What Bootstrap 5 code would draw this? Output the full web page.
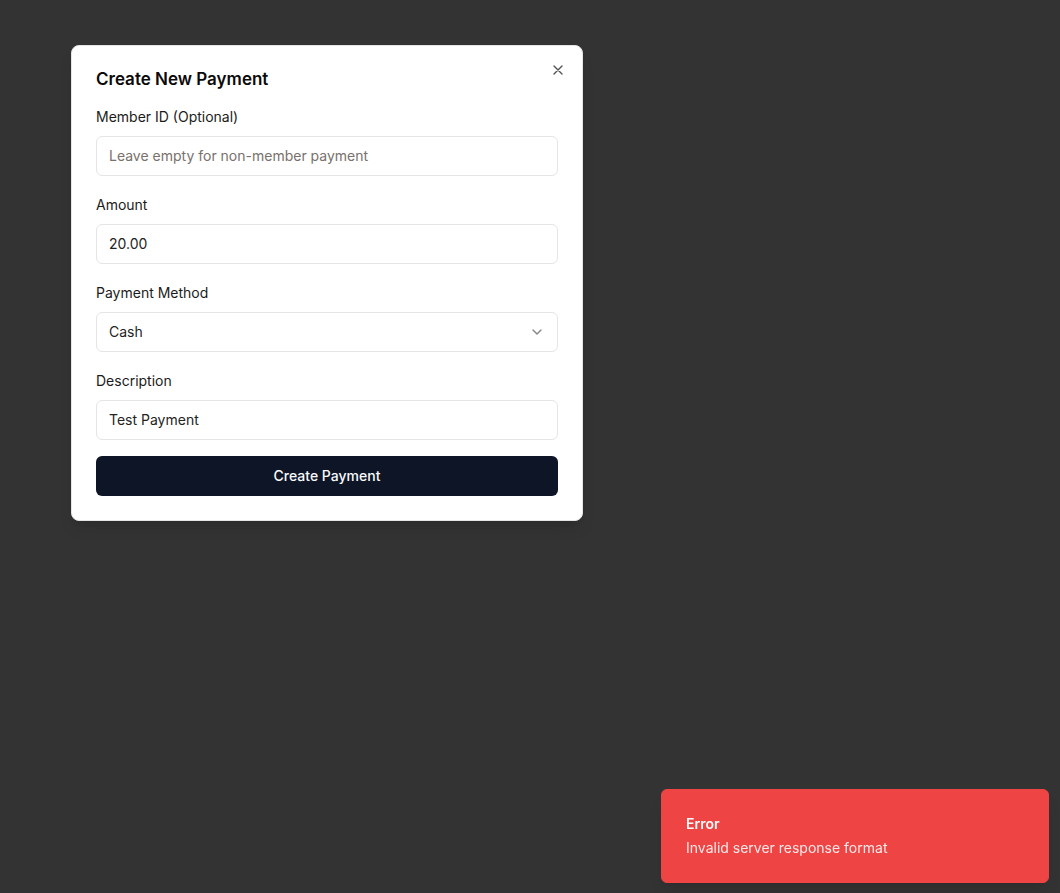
<!DOCTYPE html>
<html lang="en">
<head>
<meta charset="utf-8">
<meta name="viewport" content="width=device-width, initial-scale=1">
<title>Create New Payment</title>
<link href="https://cdn.jsdelivr.net/npm/bootstrap@5.3.0/dist/css/bootstrap.min.css" rel="stylesheet">
<style>
  body { background: #333; color: #0c0a09; font-family: Inter, "Liberation Sans", sans-serif; font-size: 14px; line-height: 20px; }
  .page { padding: 45px 71px; }
  .payment-dialog { max-width: 512px; border: 1px solid #e5e5e5; border-radius: 8px; box-shadow: 0 10px 15px -3px rgba(0,0,0,.1), 0 4px 6px -4px rgba(0,0,0,.1); }
  .dialog-title { font-size: 17px; line-height: 18px; font-weight: 600; }
  .close-btn { top: 16px; right: 16px; width: 16px; height: 16px; opacity: .7; color: #0c0a09; }
  .field-label { display: block; line-height: 26px; margin-bottom: 6px; color: #1c1b1a; }
  .payment-dialog .form-control, .payment-dialog .form-select { height: 40px; padding: 8px 12px; font-size: 14px; line-height: 20px; border-color: #e5e5e5; border-radius: 6px; color: #242322; }
  .payment-dialog .form-control { padding: 7px 12px 9px; }
  .payment-dialog .form-control::placeholder { color: #78716c; }
  .payment-dialog .form-select { background-image: none; }
  .chevron { right: 13px; top: 12px; opacity: .5; }
  .submit-btn, .submit-btn:hover { height: 40px; background: #0d1526; color: #f8fafc; font-size: 14px; line-height: 20px; font-weight: 500; border: 0; border-radius: 6px; }
  .error-toast { width: 388px; max-width: 100%; padding: 24px; background: #ef4444; color: #fafafa; border: 1px solid #ef4444; border-radius: 6px; box-shadow: 0 10px 15px -3px rgba(0,0,0,.1), 0 4px 6px -4px rgba(0,0,0,.1); }
  .toast-message { opacity: .9; }
  .toast-area { padding: 10px 11px; }
</style>
</head>
<body>
<main class="page">
  <section class="payment-dialog bg-white p-4 position-relative" role="dialog" aria-labelledby="title">
    <h1 class="dialog-title mb-3" id="title">Create New Payment</h1>
    <button type="button" class="close-btn btn p-0 border-0 d-flex position-absolute" aria-label="Close">
      <svg width="16" height="16" viewBox="0 0 24 24" fill="none" stroke="currentColor" stroke-width="2" stroke-linecap="round" stroke-linejoin="round"><path d="M18 6 6 18M6 6l12 12"/></svg>
    </button>
    <form class="d-flex flex-column gap-3">
      <div>
        <label class="field-label" for="member">Member ID (Optional)</label>
        <input class="form-control" id="member" type="text" placeholder="Leave empty for non-member payment">
      </div>
      <div>
        <label class="field-label" for="amount">Amount</label>
        <input class="form-control" id="amount" type="text" inputmode="decimal" value="20.00">
      </div>
      <div>
        <label class="field-label" for="method">Payment Method</label>
        <div class="position-relative">
          <select class="form-select" id="method"><option>Cash</option></select>
          <svg class="chevron position-absolute pe-none" width="16" height="16" viewBox="0 0 24 24" fill="none" stroke="currentColor" stroke-width="2" stroke-linecap="round" stroke-linejoin="round" aria-hidden="true"><path d="m6 9 6 6 6-6"/></svg>
        </div>
      </div>
      <div>
        <label class="field-label" for="description">Description</label>
        <input class="form-control" id="description" type="text" value="Test Payment">
      </div>
      <button type="button" class="submit-btn btn w-100">Create Payment</button>
    </form>
  </section>
</main>
<div class="toast-area position-fixed bottom-0 end-0">
  <div class="error-toast d-flex flex-column gap-1" role="alert">
    <div class="fw-semibold">Error</div>
    <div class="toast-message">Invalid server response format</div>
  </div>
</div>
<script src="https://cdn.jsdelivr.net/npm/bootstrap@5.3.0/dist/js/bootstrap.bundle.min.js"></script>
</body>
</html>
